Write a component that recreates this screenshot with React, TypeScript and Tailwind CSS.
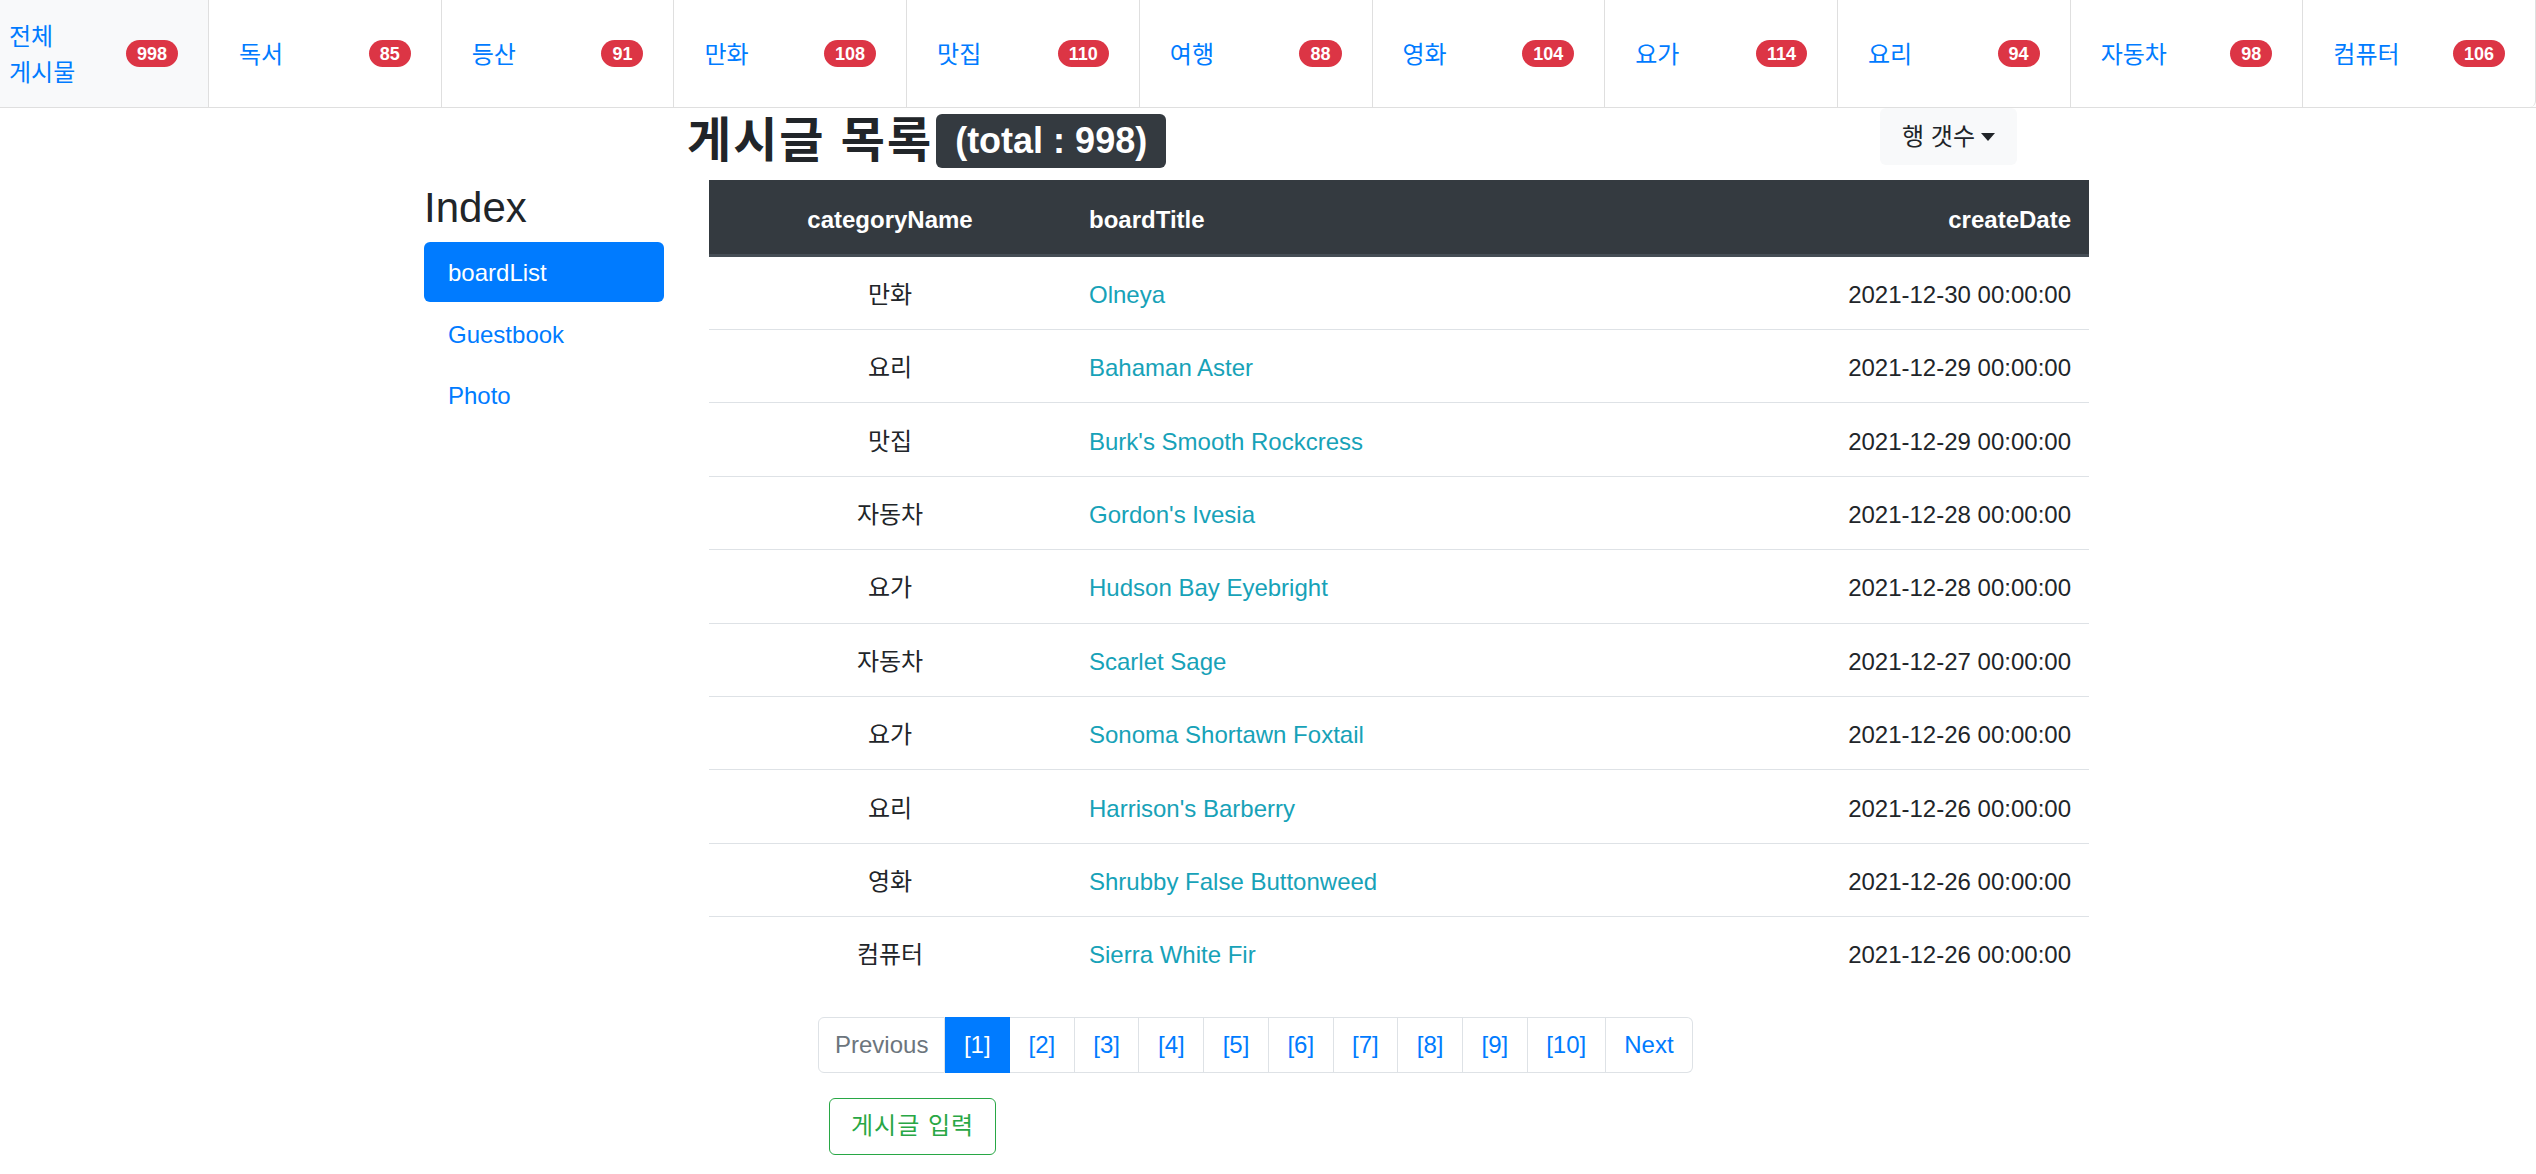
import React from "react";

const cats: [string, number][] = [
  ["독서", 85],
  ["등산", 91],
  ["만화", 108],
  ["맛집", 110],
  ["여행", 88],
  ["영화", 104],
  ["요가", 114],
  ["요리", 94],
  ["자동차", 98],
  ["컴퓨터", 106],
];

const rows: [string, string, string][] = [
  ["만화", "Olneya", "2021-12-30 00:00:00"],
  ["요리", "Bahaman Aster", "2021-12-29 00:00:00"],
  ["맛집", "Burk's Smooth Rockcress", "2021-12-29 00:00:00"],
  ["자동차", "Gordon's Ivesia", "2021-12-28 00:00:00"],
  ["요가", "Hudson Bay Eyebright", "2021-12-28 00:00:00"],
  ["자동차", "Scarlet Sage", "2021-12-27 00:00:00"],
  ["요가", "Sonoma Shortawn Foxtail", "2021-12-26 00:00:00"],
  ["요리", "Harrison's Barberry", "2021-12-26 00:00:00"],
  ["영화", "Shrubby False Buttonweed", "2021-12-26 00:00:00"],
  ["컴퓨터", "Sierra White Fir", "2021-12-26 00:00:00"],
];

function Badge({ n }: { n: number }) {
  return (
    <span className="flex h-[27px] items-center rounded-full bg-[#dc3545] px-[11px] text-[18px] font-bold leading-none text-white">
      {n}
    </span>
  );
}

export default function App() {
  return (
    <div
      className="min-h-screen bg-white text-[#212529]"
      style={{ fontFamily: '"Liberation Sans", "Noto Sans CJK KR", sans-serif' }}
    >
      {/* top category nav */}
      <nav className="flex h-[108px] border-b border-[#dfdfdf]">
        <div className="flex w-[209px] shrink-0 items-center justify-between border-r border-[#dfdfdf] bg-[#f8f9fa] pl-[9px] pr-[30px]">
          <span className="flex flex-col pt-[2px] text-[24px] leading-[36px] text-[#007bff]">
            <span className="whitespace-nowrap">전체</span>
            <span className="whitespace-nowrap">게시물</span>
          </span>
          <Badge n={998} />
        </div>
        {cats.map(([name, n], i) => (
          <div
            key={name}
            className={
              i === cats.length - 1
                ? "flex flex-1 items-center justify-between rounded-br-[6px] border-r border-[#dfdfdf] px-[30px]"
                : "flex flex-1 items-center justify-between border-r border-[#dfdfdf] px-[30px]"
            }
          >
            <span className="whitespace-nowrap pt-[2px] text-[24px] leading-[36px] text-[#007bff]">{name}</span>
            <Badge n={n} />
          </div>
        ))}
      </nav>

      {/* title row */}
      <div className="ml-[687px] flex w-[1330px] items-start justify-between">
        <div className="mt-[6px] flex items-center gap-[3px]">
          <h2 className="text-[48px] font-bold leading-[54px] tracking-[2px] text-[#212529]">게시글 목록</h2>
          <span className="flex h-[54px] items-center rounded-[6px] bg-[#343a40] px-[19px] text-[36px] font-bold leading-none text-white">
            (total : 998)
          </span>
        </div>
        <button className="flex h-[57px] items-center rounded-[6px] bg-[#f8f9fa] px-[22px] text-[24px] leading-[36px] text-[#212529]">
          행 갯수
          <span className="ml-[6px] inline-block h-0 w-0 border-x-[7px] border-t-[8px] border-x-transparent border-t-[#212529]" />
        </button>
      </div>

      {/* main */}
      <div className="ml-[424px] mt-[12px] flex">
        <aside className="w-[240px] shrink-0">
          <h3 className="mb-[9px] mt-[3px] text-[42px] font-normal leading-[50px] text-[#212529]">Index</h3>
          <div className="flex flex-col">
            <a className="h-[60px] rounded-[6px] bg-[#007bff] px-[24px] pt-[2px] text-[24px] leading-[58px] text-white">boardList</a>
            <a className="h-[61px] px-[24px] pt-[4px] text-[24px] leading-[57px] text-[#007bff]">Guestbook</a>
            <a className="h-[61px] px-[24px] pt-[4px] text-[24px] leading-[57px] text-[#007bff]">Photo</a>
          </div>
        </aside>

        <main className="ml-[45px] w-[1380px]">
          <div className="grid h-[77px] grid-cols-[362px_1fr_420px] items-center border-b-[3px] border-[#454d55] bg-[#343a40] pt-[5px] text-[24px] font-bold text-white">
            <div className="text-center">categoryName</div>
            <div className="pl-[18px]">boardTitle</div>
            <div className="pr-[18px] text-right">createDate</div>
          </div>
          {rows.map(([c, t, d], i) => (
            <div
              key={i}
              className={
                i === 0
                  ? "grid h-[72px] grid-cols-[362px_1fr_420px] items-center pt-[4px] text-[24px]"
                  : "grid h-[73.4px] grid-cols-[362px_1fr_420px] items-center border-t border-[#dee2e6] pt-[4px] text-[24px]"
              }
            >
              <div className="text-center text-[#212529]">{c}</div>
              <div className="pl-[18px] text-[#17a2b8]">{t}</div>
              <div className="pr-[18px] text-right text-[#212529]">{d}</div>
            </div>
          ))}

          <div className="ml-[109px] mt-[27px] flex w-fit text-[24px] leading-[30px]">
            <span className="rounded-l-[6px] border border-[#dee2e6] px-[16px] py-[12px] text-[#6c757d]">Previous</span>
            <span className="border border-l-0 border-[#007bff] bg-[#007bff] px-[18.5px] py-[12px] text-white">[1]</span>
            {[2, 3, 4, 5, 6, 7, 8, 9, 10].map((p) => (
              <span key={p} className="border border-l-0 border-[#dee2e6] px-[18.5px] py-[12px] text-[#007bff]">
                [{p}]
              </span>
            ))}
            <span className="rounded-r-[6px] border border-l-0 border-[#dee2e6] px-[18.5px] py-[12px] text-[#007bff]">Next</span>
          </div>

          <button className="ml-[120px] mt-[25px] h-[57px] rounded-[6px] border border-[#28a745] px-[21px] text-[24px] leading-[36px] tracking-[1px] text-[#28a745]">
            게시글 입력
          </button>
        </main>
      </div>
    </div>
  );
}
